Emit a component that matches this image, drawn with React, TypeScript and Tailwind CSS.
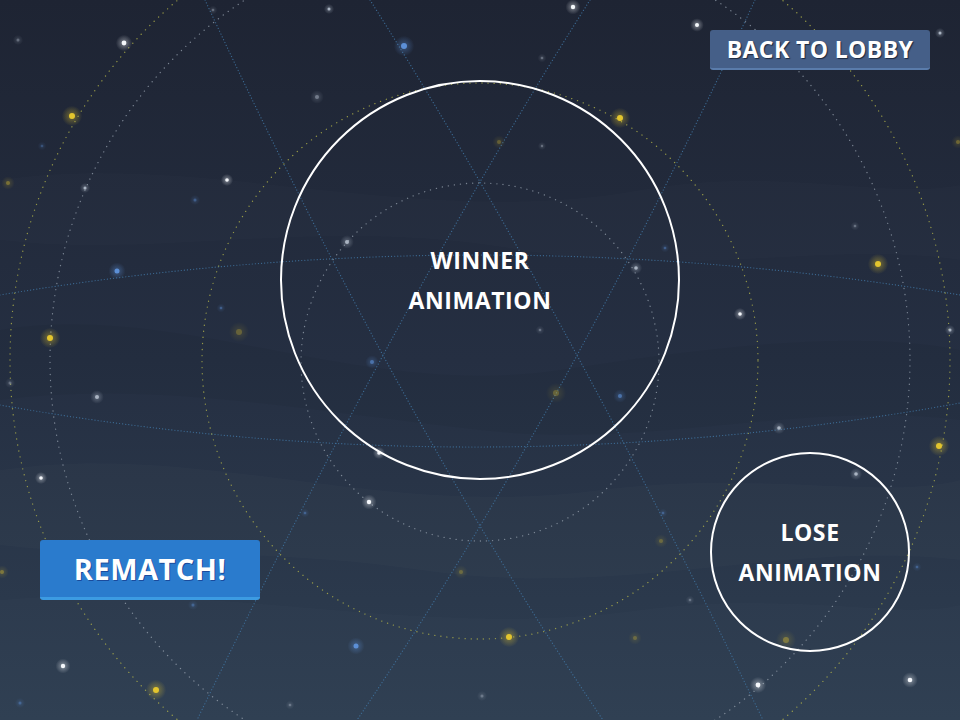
import React from 'react';

type Star = { x: number; y: number; r: number; c: 'w' | 'g' | 'y' | 'b'; o?: number };

const stars: Star[] = [
  { x: 124, y: 43, r: 2.4, c: 'w' },
  { x: 573, y: 7, r: 2.2, c: 'w' },
  { x: 697, y: 25, r: 2, c: 'w' },
  { x: 227, y: 180, r: 1.8, c: 'w' },
  { x: 740, y: 314, r: 1.8, c: 'w' },
  { x: 369, y: 502, r: 2.2, c: 'w' },
  { x: 758, y: 685, r: 2.4, c: 'w' },
  { x: 910, y: 680, r: 2.3, c: 'w' },
  { x: 63, y: 666, r: 2.2, c: 'w' },
  { x: 41, y: 478, r: 1.8, c: 'w' },
  { x: 97, y: 397, r: 2, c: 'g' },
  { x: 347, y: 242, r: 2, c: 'g' },
  { x: 636, y: 268, r: 1.8, c: 'g' },
  { x: 856, y: 474, r: 1.8, c: 'g' },
  { x: 779, y: 428, r: 1.8, c: 'g' },
  { x: 379, y: 453, r: 1.8, c: 'w' },
  { x: 940, y: 33, r: 1.5, c: 'g' },
  { x: 329, y: 9, r: 1.5, c: 'g' },
  { x: 213, y: 10, r: 1.3, c: 'g', o: 0.5 },
  { x: 317, y: 97, r: 2, c: 'g', o: 0.6 },
  { x: 85, y: 188, r: 1.5, c: 'g' },
  { x: 542, y: 58, r: 1.3, c: 'g', o: 0.5 },
  { x: 855, y: 226, r: 1.3, c: 'g', o: 0.5 },
  { x: 950, y: 330, r: 1.5, c: 'g' },
  { x: 18, y: 40, r: 1.5, c: 'g', o: 0.5 },
  { x: 10, y: 383, r: 1.5, c: 'g', o: 0.5 },
  { x: 482, y: 696, r: 1.5, c: 'g', o: 0.5 },
  { x: 540, y: 330, r: 1.3, c: 'g', o: 0.5 },
  { x: 542, y: 146, r: 1.2, c: 'g', o: 0.5 },
  { x: 690, y: 600, r: 1.3, c: 'g', o: 0.5 },
  { x: 290, y: 705, r: 1.3, c: 'g', o: 0.5 },
  { x: 72, y: 116, r: 3, c: 'y' },
  { x: 620, y: 118, r: 3, c: 'y' },
  { x: 878, y: 264, r: 3, c: 'y' },
  { x: 50, y: 338, r: 3, c: 'y' },
  { x: 939, y: 446, r: 3, c: 'y' },
  { x: 509, y: 637, r: 3, c: 'y' },
  { x: 156, y: 690, r: 3, c: 'y' },
  { x: 239, y: 332, r: 3, c: 'y', o: 0.35 },
  { x: 556, y: 393, r: 3, c: 'y', o: 0.35 },
  { x: 786, y: 640, r: 3, c: 'y', o: 0.45 },
  { x: 461, y: 572, r: 2, c: 'y', o: 0.35 },
  { x: 635, y: 638, r: 2, c: 'y', o: 0.35 },
  { x: 8, y: 183, r: 2, c: 'y', o: 0.45 },
  { x: 2, y: 572, r: 2, c: 'y', o: 0.45 },
  { x: 499, y: 142, r: 2, c: 'y', o: 0.35 },
  { x: 661, y: 541, r: 2, c: 'y', o: 0.35 },
  { x: 958, y: 142, r: 2, c: 'y', o: 0.4 },
  { x: 404, y: 46, r: 3, c: 'b' },
  { x: 117, y: 271, r: 2.5, c: 'b' },
  { x: 356, y: 646, r: 2.5, c: 'b' },
  { x: 372, y: 362, r: 2, c: 'b', o: 0.7 },
  { x: 620, y: 396, r: 2, c: 'b', o: 0.7 },
  { x: 195, y: 200, r: 1.5, c: 'b', o: 0.5 },
  { x: 42, y: 146, r: 1.3, c: 'b', o: 0.4 },
  { x: 221, y: 308, r: 1.3, c: 'b', o: 0.5 },
  { x: 665, y: 248, r: 1.3, c: 'b', o: 0.5 },
  { x: 193, y: 605, r: 1.5, c: 'b', o: 0.5 },
  { x: 305, y: 513, r: 1.3, c: 'b', o: 0.5 },
  { x: 663, y: 513, r: 1.3, c: 'b', o: 0.5 },
  { x: 917, y: 567, r: 1.3, c: 'b', o: 0.5 },
  { x: 20, y: 703, r: 1.5, c: 'b', o: 0.5 },
];

const starColor = { w: '#f4f7fb', g: '#aab4c2', y: '#e3c52e', b: '#5c8fd6' };

const StarField: React.FC = () => (
  <svg
    className="absolute inset-0 h-full w-full"
    viewBox="0 0 960 720"
    preserveAspectRatio="none"
  >
    <defs>
      <linearGradient id="sky" x1="0" y1="0" x2="0" y2="1">
        <stop offset="0" stopColor="#1e2433" />
        <stop offset="0.5" stopColor="#252f42" />
        <stop offset="1" stopColor="#2e3e51" />
      </linearGradient>
      {(['w', 'g', 'y', 'b'] as const).map((c) => (
        <radialGradient key={c} id={`glow-${c}`}>
          <stop offset="0" stopColor={starColor[c]} stopOpacity="0.45" />
          <stop offset="1" stopColor={starColor[c]} stopOpacity="0" />
        </radialGradient>
      ))}
    </defs>
    <rect width="960" height="720" fill="url(#sky)" />

    {/* soft bands */}
    <path d="M0,180 C200,150 420,230 640,190 C780,165 880,200 960,185 L960,260 C820,240 700,280 520,250 C320,215 160,260 0,240 Z" fill="#ffffff" opacity="0.012" />
    <path d="M0,330 C180,300 360,400 560,370 C720,345 860,330 960,350 L960,420 C800,400 650,450 480,430 C300,410 150,380 0,400 Z" fill="#000000" opacity="0.04" />
    <path d="M0,470 C200,440 380,520 600,490 C760,470 880,500 960,480 L960,560 C780,540 620,600 420,570 C240,545 120,560 0,545 Z" fill="#ffffff" opacity="0.015" />
    <path d="M0,600 C220,580 420,640 640,610 C800,590 900,620 960,605 L960,720 L0,720 Z" fill="#ffffff" opacity="0.012" />

    {/* celestial grid */}
    <g fill="none" strokeLinecap="round">
      <g stroke="#4176a3" strokeWidth="1.2" strokeDasharray="0.1 3" opacity="0.85">
        <path d="M590,0 Q400,300 197,720" />
        <path d="M370,0 Q560,300 763,720" />
        <path d="M205,0 Q400,420 603,720" />
        <path d="M755,0 Q560,420 357,720" />
        <path d="M0,295 Q480,215 960,295" />
        <path d="M0,405 Q480,490 960,403" />
      </g>
      <g stroke="#98a3b0" strokeWidth="1.3" strokeDasharray="0.1 6" opacity="0.75">
        <circle cx="480" cy="362" r="179" />
        <circle cx="480" cy="360" r="430" />
      </g>
      <g stroke="#b2b44a" strokeWidth="1.3" strokeDasharray="0.1 6" opacity="0.8">
        <circle cx="480" cy="361" r="278" />
        <circle cx="480" cy="360" r="470" />
      </g>
    </g>

    {stars.map((s, i) => (
      <g key={i} opacity={s.o ?? 1}>
        <circle cx={s.x} cy={s.y} r={s.r * 3.4} fill={`url(#glow-${s.c})`} />
        <circle cx={s.x} cy={s.y} r={s.r} fill={starColor[s.c]} />
      </g>
    ))}
  </svg>
);

const App: React.FC = () => {
  return (
    <div className="relative h-[720px] w-full overflow-hidden bg-[#232c3d] font-['Open_Sans',sans-serif] text-white">
      <StarField />

      <div className="relative flex h-full flex-col">
        <div className="flex justify-end pr-[30px] pt-[30px]">
          <button className="h-[40px] w-[220px] rounded-[3px] border-b-2 border-[#5a7cab] bg-[#455f88] text-[23px] font-bold leading-none tracking-[0.4px] [text-shadow:1px_1px_1px_#1b2840]">
            BACK TO LOBBY
          </button>
        </div>

        <div className="mt-[10px] flex h-[400px] w-[400px] flex-col items-center justify-center self-center rounded-full border-2 border-white">
          <span className="text-[23px] font-bold leading-[40px] tracking-[0.6px]">WINNER</span>
          <span className="text-[23px] font-bold leading-[40px] tracking-[0.6px]">ANIMATION</span>
        </div>

        <div className="-mt-[28px] flex items-start justify-between pl-[40px] pr-[50px]">
          <button className="mt-[88px] h-[60px] w-[220px] rounded-[3px] border-b-[3px] border-[#3c9be2] bg-[#2a7bcd] text-[29px] font-bold leading-none tracking-[0.5px] [text-shadow:1px_1px_0_#1a4b9c]">
            REMATCH!
          </button>
          <div className="flex h-[200px] w-[200px] flex-col items-center justify-center rounded-full border-2 border-white">
            <span className="text-[23px] font-bold leading-[40px] tracking-[0.6px]">LOSE</span>
            <span className="text-[23px] font-bold leading-[40px] tracking-[0.6px]">ANIMATION</span>
          </div>
        </div>
      </div>
    </div>
  );
};

export default App;
